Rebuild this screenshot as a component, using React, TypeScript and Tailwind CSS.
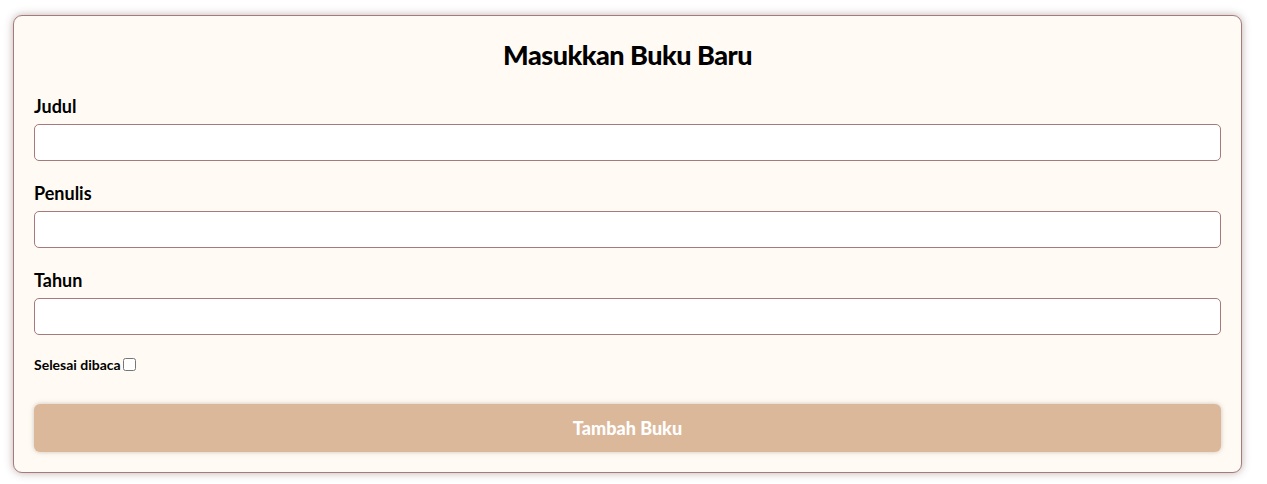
import { useState } from "react";

const font = { fontFamily: "Lato, 'Noto Sans', sans-serif" };

function Field({ label }: { label: string }) {
  return (
    <div className="flex flex-col">
      <label className="mb-[7px] text-[18px] font-bold leading-[22px] text-black">{label}</label>
      <input
        type="text"
        className="h-[37px] w-full rounded-[5px] border border-[#a47a7a] bg-white px-2 outline-none"
      />
    </div>
  );
}

export default function App() {
  const [done, setDone] = useState(false);

  return (
    <div className="min-h-screen bg-white pl-[13px] pr-[25px] pt-[15px]" style={font}>
      <section className="rounded-[9px] border border-[#a47a7a] bg-[#fffbf4] px-5 pb-[20px] pt-[21px] shadow-[0_0_8px_rgba(120,80,80,0.45)]">
        <h2 className="text-center text-[27px] font-black leading-[36px] tracking-[-0.5px] text-black">
          Masukkan Buku Baru
        </h2>
        <form className="mt-[22px] flex flex-col gap-[21px]" onSubmit={(e) => e.preventDefault()}>
          <Field label="Judul" />
          <Field label="Penulis" />
          <Field label="Tahun" />
          <div className="-mt-[2px] flex h-[20px] items-center">
            <label className="text-[14px] font-bold text-black">Selesai dibaca</label>
            <input
              type="checkbox"
              checked={done}
              onChange={(e) => setDone(e.target.checked)}
              className="ml-[2px] h-[13px] w-[13px]"
            />
          </div>
          <button
            type="submit"
            className="mt-[9px] h-[48px] w-full rounded-[6px] bg-[#dcb89b] text-[18px] font-black text-white shadow-[0_0_5px_rgba(120,90,80,0.35)]"
          >
            Tambah Buku
          </button>
        </form>
      </section>
    </div>
  );
}
